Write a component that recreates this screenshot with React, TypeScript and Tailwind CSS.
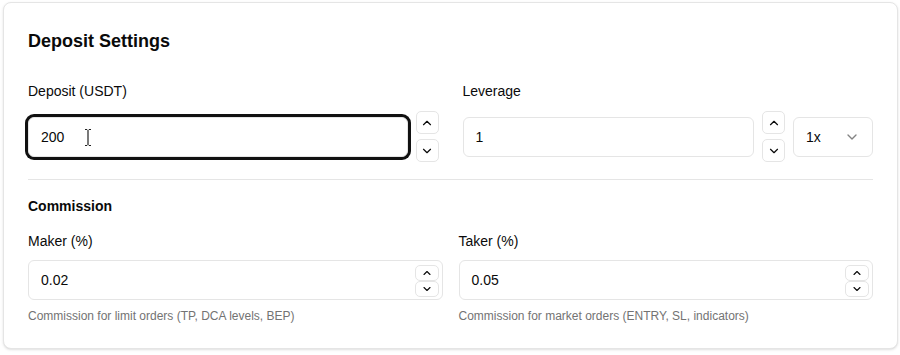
import React from 'react';
import { ChevronUp, ChevronDown } from 'lucide-react';

const font = { fontFamily: '"Liberation Sans", Arial, sans-serif' };

const StepButtons: React.FC = () => (
  <div className="flex flex-col gap-[5px]">
    <button className="flex h-[23px] w-[23px] items-center justify-center rounded-[5px] border border-[#e5e5e5] bg-white text-[#0a0a0a]">
      <ChevronUp size={14} strokeWidth={2} />
    </button>
    <button className="flex h-[23px] w-[23px] items-center justify-center rounded-[5px] border border-[#e5e5e5] bg-white text-[#0a0a0a]">
      <ChevronDown size={14} strokeWidth={2} />
    </button>
  </div>
);

const IBeam: React.FC = () => (
  <svg
    className="pointer-events-none absolute left-[55px] top-[10px]"
    width="8"
    height="19"
    viewBox="0 0 8 19"
  >
    <path d="M1 1.5h2.2M4.8 1.5H7M4 2v15M1 17.5h2.2M4.8 17.5H7" stroke="#fff" strokeWidth="3" fill="none" />
    <path d="M1 1.5h2.2M4.8 1.5H7M4 2v15M1 17.5h2.2M4.8 17.5H7" stroke="#222" strokeWidth="1.2" fill="none" />
  </svg>
);

const NumberField: React.FC<{ value: string }> = ({ value }) => (
  <div className="relative h-10 w-full rounded-md border border-[#e5e5e5] bg-white">
    <div className="flex h-full items-center px-3 text-sm text-[#0a0a0a]">{value}</div>
    <div className="absolute right-[3px] top-[4px] flex flex-col">
      <span className="flex h-4 w-[24px] items-center justify-center rounded-[5px] border border-[#e5e5e5] text-[#0a0a0a]">
        <ChevronUp size={12} strokeWidth={2.2} />
      </span>
      <span className="flex h-4 w-[24px] items-center justify-center rounded-[5px] border border-[#e5e5e5] text-[#0a0a0a]">
        <ChevronDown size={12} strokeWidth={2.2} />
      </span>
    </div>
  </div>
);

export default function App() {
  return (
    <div className="min-h-screen bg-white pl-[3px] pr-[2px] pt-[2px]" style={font}>
      <div className="rounded-lg border border-[#e5e5e5] bg-white p-6 shadow-sm">
        <h2 className="text-lg font-bold leading-7 text-[#0a0a0a]">Deposit Settings</h2>

        <div className="mt-[26px] grid grid-cols-2 gap-6">
          <div>
            <div className="mb-[10px] text-sm leading-5 text-[#0a0a0a]">Deposit (USDT)</div>
            <div className="flex items-center gap-2">
              <div className="relative h-10 flex-1 rounded-md border border-[#e5e5e5] bg-white shadow-[0_0_0_3px_#111]">
                <div className="flex h-full items-center px-3 text-sm text-[#0a0a0a]">200</div>
                <IBeam />
              </div>
              <StepButtons />
            </div>
          </div>
          <div>
            <div className="mb-[10px] text-sm leading-5 text-[#0a0a0a]">Leverage</div>
            <div className="flex items-center gap-2">
              <div className="flex h-10 flex-1 items-center rounded-md border border-[#e5e5e5] bg-white px-3 text-sm text-[#0a0a0a]">
                1
              </div>
              <StepButtons />
              <div className="flex h-10 w-20 items-center justify-between rounded-md border border-[#e5e5e5] bg-white px-3 text-sm text-[#0a0a0a]">
                <span>1x</span>
                <ChevronDown size={16} className="opacity-50" />
              </div>
            </div>
          </div>
        </div>

        <div className="mt-[17px] border-t border-[#e5e5e5] pt-4">
          <div className="text-sm font-bold leading-5 text-[#0a0a0a]">Commission</div>
          <div className="mt-[15px] grid grid-cols-2 gap-4">
            <div>
              <div className="mb-[9px] text-sm leading-5 text-[#0a0a0a]">Maker (%)</div>
              <NumberField value="0.02" />
              <p className="mt-2 text-xs leading-4 text-[#737373]">
                Commission for limit orders (TP, DCA levels, BEP)
              </p>
            </div>
            <div>
              <div className="mb-[9px] text-sm leading-5 text-[#0a0a0a]">Taker (%)</div>
              <NumberField value="0.05" />
              <p className="mt-2 text-xs leading-4 text-[#737373]">
                Commission for market orders (ENTRY, SL, indicators)
              </p>
            </div>
          </div>
        </div>
      </div>
    </div>
  );
}
